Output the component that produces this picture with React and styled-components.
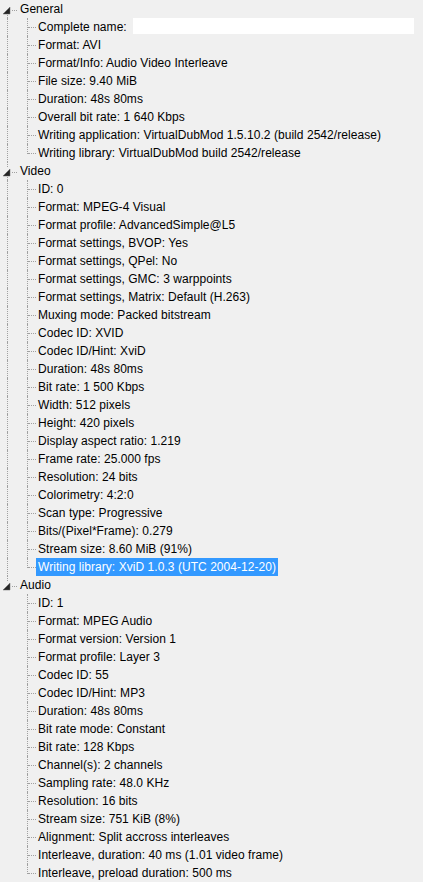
import React from "react";
import styled, { createGlobalStyle } from "styled-components";

const Global = createGlobalStyle`
  html, body { margin: 0; padding: 0; background: #f0f0f0; }
  body { font-family: "Liberation Sans", Arial, sans-serif; }
`;

const LINE = "#a0a0a0";

const Tree = styled.div`
  width: 423px;
  height: 882px;
  overflow: hidden;
  background: #f0f0f0;
  display: flex;
  flex-direction: column;
  font-family: "Liberation Sans", Arial, sans-serif;
  font-size: 12px;
  color: #000;
`;

const Group = styled.div`
  display: flex;
  flex-direction: column;
`;

const Row = styled.div`
  display: flex;
  align-items: flex-start;
  height: 18px;
  flex-shrink: 0;
`;

const ToggleSvg = styled.svg`
  width: 18px;
  height: 18px;
  flex-shrink: 0;
  display: block;
`;

const Indent = styled.span`
  display: block;
  flex-shrink: 0;
  height: 18px;
  margin-left: 7px;
  width: 10px;
  border-left: 1px dotted ${(p) => (p.$line ? LINE : "transparent")};
`;

const Branch = styled.span`
  display: flex;
  flex-shrink: 0;
  width: 18px;
  height: 18px;
`;

const VLine = styled.span`
  display: block;
  margin-left: 9px;
  width: 0;
  height: ${(p) => (p.$half ? "10px" : "18px")};
  border-left: 1px dotted ${LINE};
`;

const HLine = styled.span`
  display: block;
  margin-top: 9px;
  width: 8px;
  height: 0;
  border-top: 1px dotted ${LINE};
`;

const Label = styled.span`
  display: block;
  padding: 0 2px;
  line-height: 18px;
  height: 18px;
  white-space: nowrap;
  letter-spacing: 0.05px;
  background: ${(p) => (p.$selected ? "#3399ff" : "transparent")};
  color: ${(p) => (p.$selected ? "#fff" : "#000")};
`;

const ValueField = styled.span`
  display: block;
  width: 281px;
  height: 16px;
  margin-left: 4px;
  background: #fff;
`;

const groups = [
  {
    title: "General",
    items: [
      "Complete name:",
      "Format: AVI",
      "Format/Info: Audio Video Interleave",
      "File size: 9.40 MiB",
      "Duration: 48s 80ms",
      "Overall bit rate: 1 640 Kbps",
      "Writing application: VirtualDubMod 1.5.10.2 (build 2542/release)",
      "Writing library: VirtualDubMod build 2542/release",
    ],
  },
  {
    title: "Video",
    items: [
      "ID: 0",
      "Format: MPEG-4 Visual",
      "Format profile: AdvancedSimple@L5",
      "Format settings, BVOP: Yes",
      "Format settings, QPel: No",
      "Format settings, GMC: 3 warppoints",
      "Format settings, Matrix: Default (H.263)",
      "Muxing mode: Packed bitstream",
      "Codec ID: XVID",
      "Codec ID/Hint: XviD",
      "Duration: 48s 80ms",
      "Bit rate: 1 500 Kbps",
      "Width: 512 pixels",
      "Height: 420 pixels",
      "Display aspect ratio: 1.219",
      "Frame rate: 25.000 fps",
      "Resolution: 24 bits",
      "Colorimetry: 4:2:0",
      "Scan type: Progressive",
      "Bits/(Pixel*Frame): 0.279",
      "Stream size: 8.60 MiB (91%)",
      "Writing library: XviD 1.0.3 (UTC 2004-12-20)",
    ],
    selected: 21,
  },
  {
    title: "Audio",
    items: [
      "ID: 1",
      "Format: MPEG Audio",
      "Format version: Version 1",
      "Format profile: Layer 3",
      "Codec ID: 55",
      "Codec ID/Hint: MP3",
      "Duration: 48s 80ms",
      "Bit rate mode: Constant",
      "Bit rate: 128 Kbps",
      "Channel(s): 2 channels",
      "Sampling rate: 48.0 KHz",
      "Resolution: 16 bits",
      "Stream size: 751 KiB (8%)",
      "Alignment: Split accross interleaves",
      "Interleave, duration: 40 ms (1.01 video frame)",
      "Interleave, preload duration: 500 ms",
    ],
  },
];

function Toggle({ first, last }) {
  return (
    <ToggleSvg viewBox="0 0 18 18" shapeRendering="crispEdges">
      {!first && (
        <line x1="7.5" y1="0" x2="7.5" y2="6" stroke={LINE} strokeDasharray="1 1" />
      )}
      {!last && (
        <line x1="7.5" y1="15" x2="7.5" y2="18" stroke={LINE} strokeDasharray="1 1" />
      )}
      <line x1="12" y1="10.5" x2="18" y2="10.5" stroke={LINE} strokeDasharray="1 1" />
      <polygon points="3,14 10,14 10,7" fill="#262626" stroke="#6a6a6a" strokeWidth="0.5" shapeRendering="auto" />
    </ToggleSvg>
  );
}

export default function App() {
  return (
    <>
      <Global />
      <Tree>
        {groups.map((g, gi) => {
          const lastGroup = gi === groups.length - 1;
          return (
            <Group key={g.title}>
              <Row>
                <Toggle first={gi === 0} last={lastGroup} />
                <Label>{g.title}</Label>
              </Row>
              {g.items.map((it, ii) => (
                <Row key={ii}>
                  <Indent $line={!lastGroup} />
                  <Branch>
                    <VLine $half={ii === g.items.length - 1} />
                    <HLine />
                  </Branch>
                  <Label $selected={g.selected === ii}>{it}</Label>
                  {gi === 0 && ii === 0 && <ValueField />}
                </Row>
              ))}
            </Group>
          );
        })}
      </Tree>
    </>
  );
}
